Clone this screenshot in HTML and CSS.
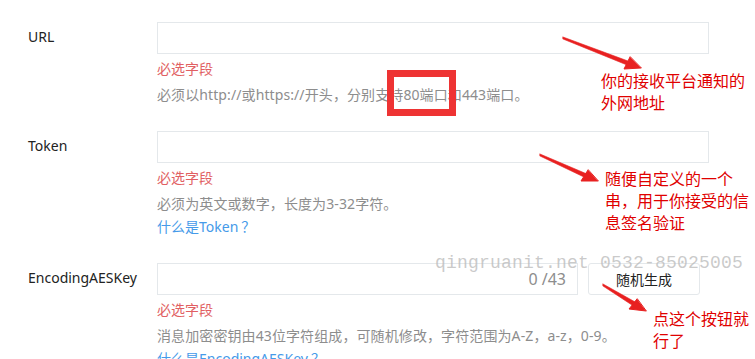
FILE: index.html
```html
<!DOCTYPE html>
<html lang="zh-CN">
<head>
<meta charset="utf-8">
<link rel="stylesheet" href="styles.css">
</head>
<body>
<div class="form">
  <div class="row">
    <label class="label">URL</label>
    <div class="field">
      <div class="input wide"></div>
      <div class="err">必选字段</div>
      <div class="help">必须以http://或https://开头，分别支持80端口和443端口。</div>
    </div>
  </div>
  <div class="row">
    <label class="label">Token</label>
    <div class="field">
      <div class="input wide"></div>
      <div class="err">必选字段</div>
      <div class="help">必须为英文或数字，长度为3-32字符。</div>
      <a class="link">什么是Token<span class="fw">？</span></a>
    </div>
  </div>
  <div class="row">
    <label class="label">EncodingAESKey</label>
    <div class="field">
      <div class="inline">
        <div class="input narrow"><span class="count">0 /43</span></div>
        <button class="btn">随机生成</button>
      </div>
      <div class="err">必选字段</div>
      <div class="help">消息加密密钥由43位字符组成，可随机修改，字符范围为A-Z，a-z，0-9。</div>
      <a class="link">什么是EncodingAESKey<span class="fw">？</span></a>
    </div>
  </div>
</div>

<div class="watermark">qingruanit.net 0532-85025005</div>
<div class="redbox"></div>

<svg class="arrows" width="755" height="359" viewBox="0 0 755 359">
  <g fill="#e82020" stroke="#e82020" stroke-linecap="round">
    <polygon stroke-width="0.6" points="563,37 628,61 627,65 563,39"/>
    <polygon stroke-width="1" points="641,68 624,69 630,57"/>
    <polygon stroke-width="0.6" points="540,154 587,174 586,178 540,156"/>
    <polygon stroke-width="1" points="598,181 581,181 588,170"/>
    <polygon stroke-width="0.6" points="603,284 637,303 635,307 603,286"/>
    <polygon stroke-width="1" points="646,311 629,309 637,299"/>
  </g>
</svg>

<div class="note n1">你的接收平台通知的<br>外网地址</div>
<div class="note n2">随便自定义的一个<br>串，用于你接受的信<br>息签名验证</div>
<div class="note n3">点这个按钮就<br>行了</div>
</body>
</html>
```

FILE: styles.css
```css
html, body {
  margin: 0;
  padding: 0;
  background: #fff;
}
body {
  width: 755px;
  height: 359px;
  overflow: hidden;
  position: relative;
  font-family: "Noto Sans", "Noto Sans CJK SC", sans-serif;
  font-size: 14px;
  color: #222;
}
.form {
  padding-top: 22px;
  display: flex;
  flex-direction: column;
  gap: 25px;
}
.row {
  display: grid;
  grid-template-columns: 157px 1fr;
}
.label {
  padding-left: 28px;
  line-height: 30px;
  font-size: 14px;
  color: #222;
}
.field {
  display: flex;
  flex-direction: column;
  align-items: flex-start;
}
.input {
  box-sizing: border-box;
  height: 32px;
  border: 1px solid #e4e8eb;
  background: #fff;
}
.wide { width: 552px; }
.narrow {
  width: 421px;
  display: flex;
  justify-content: flex-end;
  align-items: center;
  padding-right: 11px;
}
.count {
  color: #8d8d8d;
  font-size: 16px;
}
.inline {
  display: flex;
  gap: 10px;
}
.btn {
  box-sizing: border-box;
  width: 112px;
  height: 32px;
  border: 1px solid #e4e8eb;
  border-radius: 3px;
  background: #fff;
  font-family: "Noto Sans CJK SC", sans-serif;
  font-size: 14px;
  color: #222;
  padding: 0;
}
.err {
  margin-top: 4px;
  line-height: 22px;
  font-size: 14px;
  color: #e15f63;
}
.help {
  margin-top: 4px;
  line-height: 22px;
  font-size: 14px;
  color: #8d8d8d;
  letter-spacing: 0.1px;
}
.link {
  line-height: 22px;
  font-size: 14px;
  color: #459ae9;
}
.fw {
  font-family: "Noto Sans CJK SC", sans-serif;
  padding-left: 3px;
}
.watermark {
  position: absolute;
  left: 435px;
  top: 251px;
  font-family: "Liberation Mono", monospace;
  font-size: 18px;
  letter-spacing: 0.2px;
  line-height: 24px;
  color: rgba(185, 185, 185, 0.75);
  white-space: nowrap;
}
.redbox {
  position: absolute;
  left: 387px;
  top: 70px;
  width: 69px;
  height: 46px;
  box-sizing: border-box;
  border: 7px solid #ee3333;
}
.arrows {
  position: absolute;
  left: 0;
  top: 0;
}
.note {
  position: absolute;
  font-family: "Noto Sans CJK SC", sans-serif;
  font-size: 16px;
  line-height: 22px;
  color: #e00000;
  white-space: nowrap;
}
.n1 { left: 601px; top: 69px; }
.n2 { left: 605px; top: 167px; }
.n3 { left: 653px; top: 307px; }
```
